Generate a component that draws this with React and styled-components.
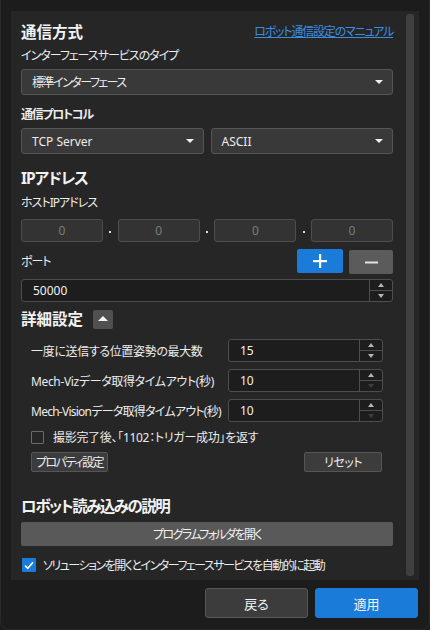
import React from "react";
import styled, { createGlobalStyle } from "styled-components";

const GlobalStyle = createGlobalStyle`
  html, body { margin: 0; padding: 0; background: #1c1c1c; }
  body {
    font-family: "Noto Sans", "Noto Sans CJK JP", sans-serif;
    color: #ececec;
    font-feature-settings: "palt";
  }
  * { box-sizing: border-box; }
`;

const Window = styled.div`
  width: 430px;
  height: 630px;
  padding: 11px 11px 0 11px;
  display: flex;
  flex-direction: column;
  background: #1c1c1c;
  border: 1px solid #2a2a2a;
  border-top: none;
  border-radius: 0 0 9px 9px;
  overflow: hidden;
`;

const Panel = styled.div`
  height: 569px;
  flex: none;
  background: #262626;
  display: flex;
  margin: 0 -1px 0 -1px;
`;

const Content = styled.div`
  flex: 1;
  padding: 11px 0 0 10px;
  display: flex;
  flex-direction: column;
`;

const ScrollTrack = styled.div`
  width: 26px;
  padding: 3px 5px 4px 13px;
  display: flex;
`;

const Thumb = styled.div`
  flex: 1;
  background: #3f3f3f;
  border-radius: 3px;
`;

const Contents = styled.div`
  width: 372px;
  display: flex;
  flex-direction: column;
`;

const HeaderRow = styled.div`
  height: 20px;
  flex: none;
  display: flex;
  align-items: center;
  justify-content: space-between;
`;

const SectionTitle = styled.div`
  font-size: 15.5px;
  font-weight: 700;
  line-height: 20px;
  height: 20px;
  flex: none;
  letter-spacing: ${(p) => p.$ls || 0}px;
  margin-top: ${(p) => p.$mt || 0}px;
  color: #f2f2f2;
`;

const Link = styled.a`
  font-size: 12px;
  color: #3a8ee2;
  text-decoration: underline;
  line-height: 16px;
  letter-spacing: -1.2px;
`;

const FieldLabel = styled.div`
  font-size: 12px;
  line-height: 18px;
  height: 18px;
  flex: none;
  font-weight: ${(p) => (p.$bold ? 700 : 400)};
  letter-spacing: ${(p) => p.$ls || 0}px;
  margin-top: ${(p) => p.$mt || 0}px;
  color: #ececec;
`;

const Combo = styled.div`
  height: 26px;
  flex: ${(p) => (p.$grow ? "1 1 0" : "none")};
  background: #393939;
  border: 1px solid #555;
  border-radius: 3px;
  display: flex;
  align-items: center;
  justify-content: space-between;
  padding: 0 9px 0 10px;
  font-size: 12px;
  color: #ececec;
  margin-top: ${(p) => p.$mt || 0}px;
`;

const ComboText = styled.span`
  letter-spacing: ${(p) => p.$ls || 0}px;
`;

const Caret = styled.span`
  width: 0;
  height: 0;
  border-left: 4px solid transparent;
  border-right: 4px solid transparent;
  border-top: 4px solid #f0f0f0;
`;

const ComboRow = styled.div`
  display: flex;
  flex: none;
  gap: 7px;
  margin-top: ${(p) => p.$mt || 0}px;
`;

const IpRow = styled.div`
  display: flex;
  flex: none;
  align-items: center;
  height: 23px;
  margin-top: ${(p) => p.$mt || 0}px;
`;

const IpBox = styled.div`
  width: 82px;
  height: 23px;
  background: #333;
  border: 1px solid #4e4e4e;
  border-radius: 3px;
  display: flex;
  align-items: center;
  justify-content: center;
  font-size: 12px;
  color: #7c7c7c;
`;

const IpDot = styled.div`
  flex: 1;
  display: flex;
  justify-content: center;
  &::before {
    content: "";
    width: 2px;
    height: 2px;
    background: #ddd;
    margin-top: 2px;
  }
`;

const PortRow = styled.div`
  display: flex;
  flex: none;
  align-items: center;
  height: 25px;
  margin-top: ${(p) => p.$mt || 0}px;
`;

const Spacer = styled.div`
  flex: 1;
`;

const IconButton = styled.button`
  width: ${(p) => p.$w}px;
  height: 24px;
  border: none;
  border-radius: 2px;
  background: ${(p) => p.$bg};
  margin-left: ${(p) => p.$ml || 0}px;
  display: flex;
  align-items: center;
  justify-content: center;
  padding: 0;
  align-self: ${(p) => p.$self || "flex-start"};
`;

const Spin = styled.div`
  height: 23px;
  flex: none;
  width: ${(p) => (p.$w ? `${p.$w}px` : "auto")};
  background: #1d1d1d;
  border: 1px solid #4e4e4e;
  border-radius: 3px;
  display: flex;
  margin-top: ${(p) => p.$mt || 0}px;
`;

const SpinValue = styled.div`
  flex: 1;
  display: flex;
  align-items: center;
  padding-left: ${(p) => p.$pl || 11}px;
  font-size: 12px;
  color: #f2f2f2;
`;

const SpinButtons = styled.div`
  width: 23px;
  border-left: 1px solid #4e4e4e;
  display: flex;
  flex-direction: column;
`;

const SpinHalf = styled.div`
  flex: 1;
  display: flex;
  align-items: center;
  justify-content: center;
  & + & {
    border-top: 1px solid #4e4e4e;
  }
`;

const Tri = styled.span`
  width: 0;
  height: 0;
  border-left: 3.5px solid transparent;
  border-right: 3.5px solid transparent;
  ${(p) =>
    p.$up
      ? `border-bottom: 4px solid ${p.$dim ? "#3e3e3e" : "#b4b4b4"};`
      : `border-top: 4px solid ${p.$dim ? "#3e3e3e" : "#b4b4b4"};`}
`;

const DetailHeader = styled.div`
  display: flex;
  flex: none;
  align-items: center;
  gap: 10px;
  height: 20px;
  margin-top: ${(p) => p.$mt || 0}px;
`;

const ToggleButton = styled.div`
  width: 20px;
  height: 19px;
  background: #505050;
  border-radius: 2px;
  display: flex;
  align-items: center;
  justify-content: center;
`;

const UpTri = styled.span`
  width: 0;
  height: 0;
  border-left: 5px solid transparent;
  border-right: 5px solid transparent;
  border-bottom: 5px solid #f4f4f4;
  margin-top: -1px;
`;

const SettingRow = styled.div`
  display: flex;
  flex: none;
  align-items: center;
  height: 23px;
  padding: 0 10px 0 10px;
  margin-top: ${(p) => p.$mt || 0}px;
`;

const SettingLabel = styled.div`
  flex: 1;
  min-width: 0;
  font-size: 12px;
  letter-spacing: ${(p) => p.$ls ?? -0.35}px;
  color: #ececec;
  white-space: nowrap;
`;

const CheckRow = styled.div`
  display: flex;
  flex: none;
  align-items: center;
  height: 16px;
  gap: ${(p) => p.$gap || 8}px;
  padding-left: ${(p) => p.$pl || 0}px;
  margin-top: ${(p) => p.$mt || 0}px;
  font-size: 12px;
  color: #ececec;
`;

const CheckText = styled.span`
  white-space: nowrap;
  letter-spacing: ${(p) => p.$ls || 0}px;
`;

const CheckBox = styled.div`
  width: ${(p) => (p.$checked ? 14 : 13)}px;
  height: ${(p) => (p.$checked ? 14 : 13)}px;
  border-radius: 1px;
  background: ${(p) => (p.$checked ? "#1a7bd8" : "#262626")};
  border: ${(p) => (p.$checked ? "none" : "1px solid #6a6a6a")};
  display: flex;
  align-items: center;
  justify-content: center;
  flex: none;
`;

const ButtonRow = styled.div`
  display: flex;
  flex: none;
  justify-content: space-between;
  padding: 0 11px 0 10px;
  margin-top: ${(p) => p.$mt || 0}px;
`;

const SmallButton = styled.div`
  height: 20px;
  width: ${(p) => p.$w}px;
  background: #3c3c3c;
  border: 1px solid #565656;
  border-radius: 2px;
  display: flex;
  align-items: center;
  justify-content: center;
  font-size: 12px;
  white-space: nowrap;
  letter-spacing: ${(p) => p.$ls || 0}px;
  color: #ececec;
`;

const WideButton = styled.div`
  height: 24px;
  flex: none;
  background: #595959;
  border-radius: 2px;
  display: flex;
  align-items: center;
  justify-content: center;
  font-size: 12px;
  letter-spacing: -1.6px;
  color: #f2f2f2;
  margin-top: ${(p) => p.$mt || 0}px;
`;

const Footer = styled.div`
  display: flex;
  flex: none;
  justify-content: flex-end;
  gap: 7px;
  padding-top: 8px;
`;

const FooterButton = styled.div`
  width: 103px;
  height: 30px;
  border-radius: 3px;
  display: flex;
  align-items: center;
  justify-content: center;
  font-size: 13px;
  color: #f4f4f4;
  background: ${(p) => (p.$primary ? "#1a7bd8" : "#3c3c3c")};
  border: 1px solid ${(p) => (p.$primary ? "#1a7bd8" : "#575757")};
`;

function SpinBox({ value, w, mt, pl, downDim }) {
  return (
    <Spin $w={w} $mt={mt}>
      <SpinValue $pl={pl}>{value}</SpinValue>
      <SpinButtons>
        <SpinHalf>
          <Tri $up />
        </SpinHalf>
        <SpinHalf>
          <Tri $dim={downDim} />
        </SpinHalf>
      </SpinButtons>
    </Spin>
  );
}

export default function App() {
  return (
    <>
      <GlobalStyle />
      <Window>
        <Panel>
          <Content>
            <Contents>
              <HeaderRow>
                <SectionTitle>通信方式</SectionTitle>
                <Link>ロボット通信設定のマニュアル</Link>
              </HeaderRow>
              <FieldLabel $mt={5} $ls={-1}>
                インターフェースサービスのタイプ
              </FieldLabel>
              <Combo $mt={4}>
                <ComboText $ls={-1.5}>標準インターフェース</ComboText>
                <Caret />
              </Combo>
              <FieldLabel $mt={11} $bold $ls={-1.3}>
                通信プロトコル
              </FieldLabel>
              <ComboRow $mt={4}>
                <Combo $grow>
                  <ComboText>TCP Server</ComboText>
                  <Caret />
                </Combo>
                <Combo $grow>
                  <ComboText>ASCII</ComboText>
                  <Caret />
                </Combo>
              </ComboRow>
              <SectionTitle $mt={14} $ls={-1}>
                IPアドレス
              </SectionTitle>
              <FieldLabel $mt={6} $ls={-1}>
                ホストIPアドレス
              </FieldLabel>
              <IpRow $mt={7}>
                <IpBox>0</IpBox>
                <IpDot />
                <IpBox>0</IpBox>
                <IpDot />
                <IpBox>0</IpBox>
                <IpDot />
                <IpBox>0</IpBox>
              </IpRow>
              <PortRow $mt={7}>
                <FieldLabel $ls={-1}>ポート</FieldLabel>
                <Spacer />
                <IconButton $w={46} $bg="#1a7bd8">
                  <svg width="14" height="14" viewBox="0 0 14 14">
                    <rect x="6" y="0" width="2.2" height="14" fill="#fff" />
                    <rect x="0" y="6" width="14" height="2.2" fill="#fff" />
                  </svg>
                </IconButton>
                <IconButton $w={44} $bg="#5b5b5b" $ml={6} $self="flex-end">
                  <svg width="13" height="3" viewBox="0 0 13 3">
                    <rect x="0" y="0.5" width="13" height="2" fill="#e4e4e4" />
                  </svg>
                </IconButton>
              </PortRow>
              <SpinBox value="50000" mt={5} />
              <DetailHeader $mt={7}>
                <SectionTitle>詳細設定</SectionTitle>
                <ToggleButton>
                  <UpTri />
                </ToggleButton>
              </DetailHeader>
              <SettingRow $mt={10}>
                <SettingLabel>一度に送信する位置姿勢の最大数</SettingLabel>
                <SpinBox value="15" w={155} />
              </SettingRow>
              <SettingRow $mt={7}>
                <SettingLabel>Mech-Vizデータ取得タイムアウト(秒)</SettingLabel>
                <SpinBox value="10" w={155} downDim />
              </SettingRow>
              <SettingRow $mt={7}>
                <SettingLabel $ls={-0.75}>Mech-Visionデータ取得タイムアウト(秒)</SettingLabel>
                <SpinBox value="10" w={155} downDim />
              </SettingRow>
              <CheckRow $mt={7} $pl={10} $gap={9}>
                <CheckBox />
                <CheckText $ls={-0.3}>撮影完了後、「1102：トリガー成功」を返す</CheckText>
              </CheckRow>
              <ButtonRow $mt={7}>
                <SmallButton $w={77} $ls={-1.5}>
                  プロパティ設定
                </SmallButton>
                <SmallButton $w={78} $ls={-0.5}>
                  リセット
                </SmallButton>
              </ButtonRow>
              <SectionTitle $mt={24} $ls={-1.5}>
                ロボット読み込みの説明
              </SectionTitle>
              <WideButton $mt={6}>プログラムフォルダを開く</WideButton>
              <CheckRow $mt={11} $pl={1} $gap={7}>
                <CheckBox $checked>
                  <svg width="10" height="9" viewBox="0 0 10 9">
                    <path
                      d="M1 4.6 L3.8 7.3 L9 1.2"
                      fill="none"
                      stroke="#fff"
                      strokeWidth="1.6"
                    />
                  </svg>
                </CheckBox>
                <CheckText $ls={-1.5}>
                  ソリューションを開くとインターフェースサービスを自動的に起動
                </CheckText>
              </CheckRow>
            </Contents>
          </Content>
          <ScrollTrack>
            <Thumb />
          </ScrollTrack>
        </Panel>
        <Footer>
          <FooterButton>戻る</FooterButton>
          <FooterButton $primary>適用</FooterButton>
        </Footer>
      </Window>
    </>
  );
}
